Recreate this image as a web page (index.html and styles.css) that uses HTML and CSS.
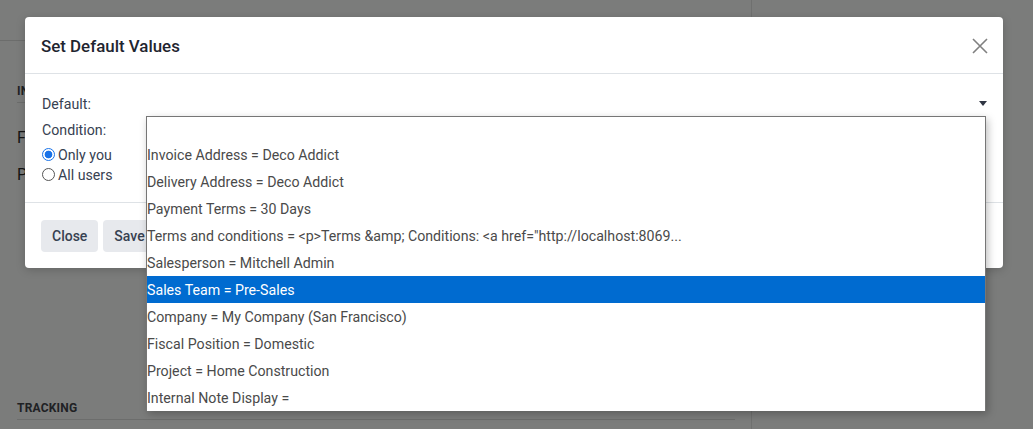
FILE: index.html
```html
<!DOCTYPE html>
<html>
<head>
<meta charset="utf-8">
<link rel="stylesheet" href="styles.css">
</head>
<body>
<div class="page">
  <div class="sheet">
    <div class="topbar"></div>
    <div class="section">
      <div class="sec-title">INVOICING</div>
      <div class="field first">F</div>
      <div class="field">P</div>
    </div>
    <div class="section tracking">
      <div class="sec-title">TRACKING</div>
    </div>
  </div>
  <div class="side"></div>
</div>

<div class="modal">
  <div class="modal-header">
    <h4 class="modal-title">Set Default Values</h4>
    <svg class="close" viewBox="0 0 16 16" width="16" height="16"><path d="M1 1L15 15M15 1L1 15" stroke="#808080" stroke-width="1.6" fill="none"/></svg>
  </div>
  <div class="modal-body">
    <div class="row-default">
      <span>Default:</span>
      <svg class="caret" viewBox="0 0 8 5" width="8" height="5"><path d="M0 0H8L4 5Z" fill="#2f3542"/></svg>
    </div>
    <div class="label">Condition:</div>
    <label class="radio"><span class="rb checked"></span>Only you</label>
    <label class="radio"><span class="rb"></span>All users</label>
  </div>
  <div class="modal-footer">
    <button class="btn">Close</button>
    <button class="btn">Save default</button>
  </div>
</div>

<ul class="dropdown">
  <li class="blank"></li>
  <li>Invoice Address = Deco Addict</li>
  <li>Delivery Address = Deco Addict</li>
  <li>Payment Terms = 30 Days</li>
  <li>Terms and conditions = &lt;p&gt;Terms &amp;amp; Conditions: &lt;a href="http://localhost:8069...</li>
  <li>Salesperson = Mitchell Admin</li>
  <li class="sel">Sales Team = Pre-Sales</li>
  <li>Company = My Company (San Francisco)</li>
  <li>Fiscal Position = Domestic</li>
  <li>Project = Home Construction</li>
  <li>Internal Note Display =</li>
</ul>
</body>
</html>
```

FILE: styles.css
```css
html, body {
  margin: 0;
  padding: 0;
  width: 1033px;
  height: 429px;
  overflow: hidden;
  background: #7b7c7b;
  font-family: Roboto, "Liberation Sans", sans-serif;
}

.page {
  display: flex;
  height: 429px;
}

.sheet {
  width: 751px;
  border-right: 1px solid #6f706f;
  display: flex;
  flex-direction: column;
}

.side {
  flex: 1;
}

.topbar {
  height: 40px;
  border-bottom: 1px solid #6c6d6c;
}

.section {
  padding: 0 16px 0 17px;
}

.sec-title {
  font-size: 12px;
  font-weight: 700;
  color: #202124;
  letter-spacing: 0.2px;
  line-height: 16px;
  padding-bottom: 3px;
  border-bottom: 1px solid #6c6d6c;
}

.section .sec-title {
  margin-top: 42px;
}

.field {
  font-size: 16px;
  color: #141414;
  line-height: 20px;
  margin-top: 17px;
}

.field.first {
  margin-top: 25px;
}

.tracking {
  margin-top: auto;
  padding-bottom: 9px;
}

.tracking .sec-title {
  margin-top: 0;
}

/* modal */
.modal {
  position: absolute;
  left: 25px;
  top: 17px;
  width: 978px;
  height: 251px;
  background: #fff;
  border-radius: 4px;
  box-shadow: 0 2px 10px rgba(0,0,0,0.18);
  display: flex;
  flex-direction: column;
}

.modal-header {
  height: 57px;
  box-sizing: border-box;
  border-bottom: 1px solid #dee2e6;
  display: flex;
  align-items: center;
  justify-content: space-between;
  padding: 1px 15px 0 16px;
}

.modal-title {
  margin: 0;
  font-size: 16.9px;
  font-weight: 500;
  color: #1f2530;
}

.modal-body {
  height: 129px;
  border-bottom: 1px solid #dee2e6;
  padding: 20px 16px 0 17px;
  box-sizing: border-box;
  font-size: 14.2px;
  color: #374151;
}

.row-default {
  display: flex;
  justify-content: space-between;
  align-items: center;
  height: 20px;
  margin-bottom: 6px;
}

.caret {
  margin-right: 0;
  position: relative;
  top: -1px;
}

.label {
  line-height: 20px;
  height: 20px;
  margin-bottom: 5px;
}

.radio {
  display: flex;
  align-items: center;
  height: 20px;
  line-height: 20px;
}

.rb {
  width: 11px;
  height: 11px;
  border: 1px solid #555;
  border-radius: 50%;
  margin: 0 3px 0 0;
  box-sizing: content-box;
  position: relative;
  top: -1px;
}

.rb.checked {
  border: 1px solid #1a73e8;
  background: radial-gradient(circle, #1a73e8 0 3.5px, #fff 4.2px);
}

.modal-footer {
  flex: 1;
  display: flex;
  align-items: center;
  gap: 5px;
  padding: 0 16px;
}

.btn {
  height: 32px;
  border: none;
  border-radius: 4px;
  background: #e7e9ed;
  color: #374151;
  font-family: Roboto, "Liberation Sans", sans-serif;
  font-size: 14px;
  font-weight: 500;
  padding: 0 11px;
}

/* dropdown popup */
.dropdown {
  position: absolute;
  left: 146px;
  top: 116px;
  width: 840px;
  height: 295px;
  margin: 0;
  padding: 0;
  list-style: none;
  box-sizing: border-box;
  background: #fff;
  border: 1px solid #767676;
  border-bottom: none;
  box-shadow: 2px 3px 8px rgba(0,0,0,0.25);
  font-size: 14.2px;
  color: #4a4a4a;
  overflow: hidden;
}

.dropdown li {
  height: 27px;
  line-height: 28px;
  padding-left: 0;
  white-space: nowrap;
}

.dropdown li.blank {
  height: 24px;
}

.dropdown li.sel {
  background: #006bd0;
  color: #fff;
}
```
